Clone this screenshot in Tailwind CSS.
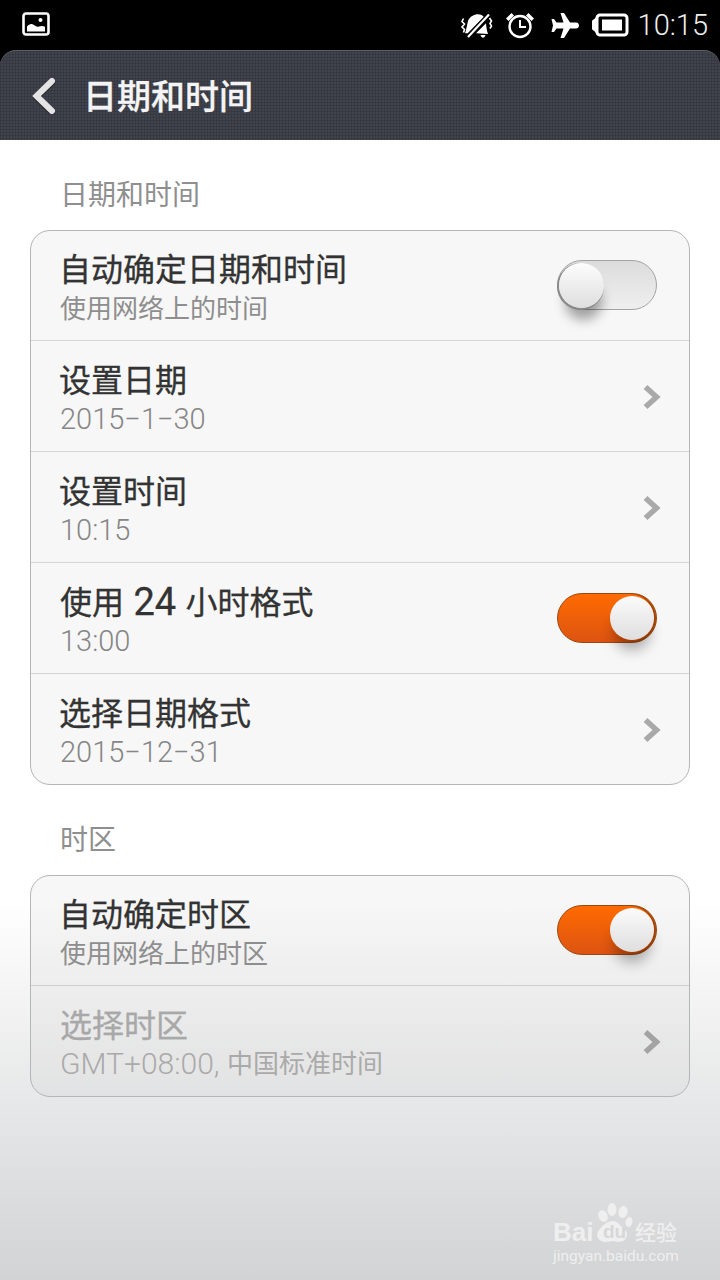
<!DOCTYPE html>
<html lang="zh-CN">
<head>
<meta charset="utf-8">
<script src="https://cdn.jsdelivr.net/npm/@tailwindcss/browser@4"></script>
</head>
<body class="m-0">
<div class="relative w-[720px] h-[1280px] overflow-hidden flex flex-col bg-black font-['Roboto','Noto_Sans_CJK_SC',sans-serif]">
  <!-- status bar -->
  <div class="h-[50px] shrink-0 flex items-center justify-between pl-[22px] pr-[12px] text-white">
    <svg width="28" height="25" viewBox="0 0 28 25" class="-mt-[1px]">
      <rect x="1.5" y="1.5" width="25" height="21" rx="2.5" fill="none" stroke="#fff" stroke-width="2.6"/>
      <circle cx="18.5" cy="8" r="2" fill="#fff"/>
      <path d="M5 19.5v-5c2-2.6 4.5-3.4 7-1.6 2 1.4 3.5 2.2 5 1.6 2-.8 4-.8 6 .2v4.800z" fill="#fff"/>
    </svg>
    <div class="flex items-center">
      <svg width="32" height="27" viewBox="0 0 32 27" class="mr-[12px]">
        <path d="M7 9C9 4.500 13 2.300 17 2.300c2 0 4 .8 5.700 2.400L6.700 21.300H4C5.500 17 6 13 7 9z" fill="#fff"/>
        <path d="M15 21.300 25 11.300c.3 3.500.8 7.500 2 10.700z" fill="#fff"/>
        <path d="M19.500 23h5c-.5 1.800-1.500 2.700-2.500 2.700s-2-.9-2.500-2.700z" fill="#fff"/>
        <path d="M7 25 28 2.500" stroke="#fff" stroke-width="2.200"/>
        <path d="M2.500 6.500 1 9.500l2.500 2.500L1 15l2.500 2.500-1 3M28.500 6 30.500 9l-1.500 2.500 1.500 2.500-1.500 2.500" fill="none" stroke="#fff" stroke-width="1.600"/>
      </svg>
      <svg width="30" height="29" viewBox="0 0 30 29" class="mr-[14px]">
        <circle cx="15" cy="15.500" r="10.500" fill="none" stroke="#fff" stroke-width="2.400"/>
        <path d="M15 9v7h6" fill="none" stroke="#fff" stroke-width="2"/>
        <path d="M1 7.500 6.500 2 9 4.500 3.500 10zM29 7.500 23.500 2 21 4.500 26.500 10z" fill="#fff"/>
      </svg>
      <svg width="30" height="27" viewBox="0 0 30 27" class="mr-[12px]">
        <path d="M11.500 1h3.500l6 9.500h6c2 0 3 1.500 3 3s-1 3-3 3h-6l-6 9.500h-3.500l3-9.500h-7l-2.500 3.500h-2.500l1.500-6.500-1.500-6.500h2.500l2.500 3.500h7z" fill="#fff"/>
      </svg>
      <svg width="38" height="24" viewBox="0 0 38 24" class="mr-[9px]">
        <path d="M6 2.500c-1 2-2 3-3.500 4-.8.600-1.500 1-1.500 2v7c0 1 .7 1.400 1.500 2 1.500 1 2.500 2 3.500 4z" fill="#fff"/>
        <rect x="6" y="2" width="30" height="20" rx="3" fill="#000" stroke="#fff" stroke-width="3"/>
        <rect x="11" y="6.500" width="20" height="11" fill="#fff"/>
      </svg>
      <span class="text-[29px] leading-[50px] font-light text-[#eeeeee] font-['Roboto']">10:15</span>
    </div>
  </div>

  <!-- action bar -->
  <div class="h-[90px] shrink-0 rounded-t-[16px] border-t border-[#5d6068] flex items-center bg-[#41444d] bg-[linear-gradient(#363942_1px,transparent_1px),linear-gradient(90deg,#363942_1px,transparent_1px)] bg-[length:3px_3px]">
    <svg width="26" height="36" viewBox="0 0 26 36" class="ml-[31px] mr-[26px] mt-[1px]">
      <path d="M21 3 5.500 18 21 33" fill="none" stroke="#000" stroke-opacity=".3" stroke-width="7" stroke-linecap="round" transform="translate(0 1)"/>
      <path d="M21 3 5.500 18 21 33" fill="none" stroke="#e4e4e4" stroke-width="6" stroke-linecap="round" stroke-linejoin="miter"/>
    </svg>
    <span class="text-[34px] leading-[44px] mt-[2px] font-medium text-[#f4f4f4] [-webkit-text-stroke:0.3px_#f4f4f4]">日期和时间</span>
  </div>

  <!-- content -->
  <div class="flex-1 px-[30px] bg-[linear-gradient(#ffffff_0px,#ffffff_760px,#d2d3d5_1140px)]">
    <div class="h-[90px] pl-[30px] pt-[38px] text-[28px] leading-[36px] text-[#8f8f8f]">日期和时间</div>

    <div class="rounded-[20px] border border-[#b4b5b7] bg-[#b0b0b0]/10 overflow-hidden">
      <div class="h-[109px] pl-[28px] pr-[32px] flex items-center justify-between">
        <div class="mt-[9px]"><div class="text-[32px] leading-[38px] text-[#333333] [-webkit-text-stroke:0.3px_#333333]">自动确定日期和时间</div><div class="pl-[1px] text-[26px] leading-[40px] text-[#8e8e8e]">使用网络上的时间</div></div>
        <div class="relative w-[100px] h-[50px] -mt-[1px] rounded-full border border-[#a3a3a3] bg-[linear-gradient(#dcdcdc,#efefef)]">
          <div class="absolute left-[1px] top-[2px] w-[45px] h-[45px] rounded-full bg-[linear-gradient(#fdfdfd,#dedede)] shadow-[-1px_1px_0_1px_#8a8a8a,2px_16px_12px_-4px_rgba(0,0,0,0.35)]"></div>
        </div>
      </div>
      <div class="h-[111px] border-t border-[#d5d5d5] pl-[28px] pr-[27px] flex items-center justify-between">
        <div class="mt-[8px]"><div class="text-[32px] leading-[38px] text-[#333333] [-webkit-text-stroke:0.3px_#333333]">设置日期</div><div class="pl-[1px] text-[29px] leading-[38px] text-[#868686] font-light">2015−1−30</div></div>
        <svg width="20" height="26" viewBox="0 0 20 26" class="mt-[1px]"><path d="M3.500 3 14.500 13 3.500 23" fill="none" stroke="#a9a9a9" stroke-width="5.500"/></svg>
      </div>
      <div class="h-[111px] border-t border-[#d5d5d5] pl-[28px] pr-[27px] flex items-center justify-between">
        <div class="mt-[8px]"><div class="text-[32px] leading-[38px] text-[#333333] [-webkit-text-stroke:0.3px_#333333]">设置时间</div><div class="pl-[1px] text-[29px] leading-[38px] text-[#868686] font-light">10:15</div></div>
        <svg width="20" height="26" viewBox="0 0 20 26" class="mt-[1px]"><path d="M3.500 3 14.500 13 3.500 23" fill="none" stroke="#a9a9a9" stroke-width="5.500"/></svg>
      </div>
      <div class="h-[111px] border-t border-[#d5d5d5] pl-[28px] pr-[32px] flex items-center justify-between">
        <div class="mt-[8px]"><div class="h-[38px] pl-[1px] flex items-center text-[32px] leading-[38px] text-[#333333] [-webkit-text-stroke:0.3px_#333333] whitespace-pre">使用<span class="text-[38px] leading-[38px] -mt-[2px]"> 24 </span>小时格式</div><div class="pl-[1px] text-[29px] leading-[38px] text-[#868686] font-light">13:00</div></div>
        <div class="relative w-[100px] h-[50px] rounded-full border border-[#9a4a10] bg-[linear-gradient(#ff6a00,#dd5412)] shadow-[inset_-2px_0_0_#a04a10]">
          <div class="absolute right-[2px] top-[2px] w-[44px] h-[44px] rounded-full bg-[linear-gradient(#fbfbfb,#dedede)] shadow-[0_14px_14px_-4px_rgba(0,0,0,0.32)]"></div>
        </div>
      </div>
      <div class="h-[111px] border-t border-[#d5d5d5] pl-[28px] pr-[27px] flex items-center justify-between">
        <div class="mt-[8px]"><div class="text-[32px] leading-[38px] text-[#333333] [-webkit-text-stroke:0.3px_#333333]">选择日期格式</div><div class="pl-[1px] text-[29px] leading-[38px] text-[#868686] font-light">2015−12−31</div></div>
        <svg width="20" height="26" viewBox="0 0 20 26" class="mt-[1px]"><path d="M3.500 3 14.500 13 3.500 23" fill="none" stroke="#a9a9a9" stroke-width="5.500"/></svg>
      </div>
    </div>

    <div class="h-[90px] pl-[30px] pt-[38px] text-[28px] leading-[36px] text-[#8f8f8f]">时区</div>

    <div class="rounded-[20px] border border-[#b4b5b7] bg-[#b0b0b0]/10 overflow-hidden">
      <div class="h-[109px] pl-[28px] pr-[32px] flex items-center justify-between">
        <div class="mt-[9px]"><div class="text-[32px] leading-[38px] text-[#333333] [-webkit-text-stroke:0.3px_#333333]">自动确定时区</div><div class="pl-[1px] text-[26px] leading-[40px] text-[#8e8e8e]">使用网络上的时区</div></div>
        <div class="relative w-[100px] h-[50px] -mt-[1px] rounded-full border border-[#9a4a10] bg-[linear-gradient(#ff6a00,#dd5412)] shadow-[inset_-2px_0_0_#a04a10]">
          <div class="absolute right-[2px] top-[2px] w-[44px] h-[44px] rounded-full bg-[linear-gradient(#fbfbfb,#dedede)] shadow-[0_14px_14px_-4px_rgba(0,0,0,0.32)]"></div>
        </div>
      </div>
      <div class="h-[111px] border-t border-[#cfcfd0] pl-[28px] pr-[27px] flex items-center justify-between">
        <div class="mt-[8px]"><div class="pl-[1px] text-[32px] leading-[38px] text-[#a8a8a8] [-webkit-text-stroke:0.3px_#a8a8a8]">选择时区</div><div class="flex pl-[1px] text-[26px] leading-[38px] text-[#aaaaaa]"><span class="w-[167px] text-[30px] font-light whitespace-nowrap">GMT+08:00,</span><span>中国标准时间</span></div></div>
        <svg width="20" height="26" viewBox="0 0 20 26" class="mt-[1px]"><path d="M3.500 3 14.500 13 3.500 23" fill="none" stroke="#a3a3a3" stroke-width="5.500"/></svg>
      </div>
    </div>
  </div>

  <!-- watermark -->
  <div class="absolute left-[553px] top-[1203px] w-[130px] h-[62px] text-[#efefef]">
    <span class="absolute left-0 top-[13px] text-[26px] leading-[32px] font-bold font-['Liberation_Sans']">Bai</span>
    <svg width="40" height="42" viewBox="0 0 40 42" class="absolute left-[41px] top-0">
      <ellipse cx="9" cy="13" rx="4.500" ry="6" fill="#efefef" transform="rotate(-25 9 13)"/>
      <ellipse cx="18" cy="6.500" rx="4.500" ry="6.500" fill="#efefef"/>
      <ellipse cx="29" cy="9" rx="4.500" ry="6" fill="#efefef" transform="rotate(15 29 9)"/>
      <ellipse cx="35" cy="19" rx="3.500" ry="5" fill="#efefef" transform="rotate(10 35 19)"/>
      <path d="M19 18c5 0 8 6 12 9s2 12-6 12c-3 0-4-1-6-1s-4 1-7 1c-8 0-11-7-7-12s8-9 14-9z" fill="#efefef"/>
    </svg>
    <span class="absolute left-[50px] top-[18px] text-[19px] leading-[22px] font-bold font-['Liberation_Sans'] text-[#d6d7d9]">du</span>
    <span class="absolute left-[82px] top-[17px] text-[21px] leading-[26px] font-medium whitespace-nowrap">经验</span>
    <span class="absolute left-0 top-[44px] text-[15.500px] leading-[18px] whitespace-nowrap">jingyan.baidu.com</span>
  </div>
</div>
</body>
</html>
